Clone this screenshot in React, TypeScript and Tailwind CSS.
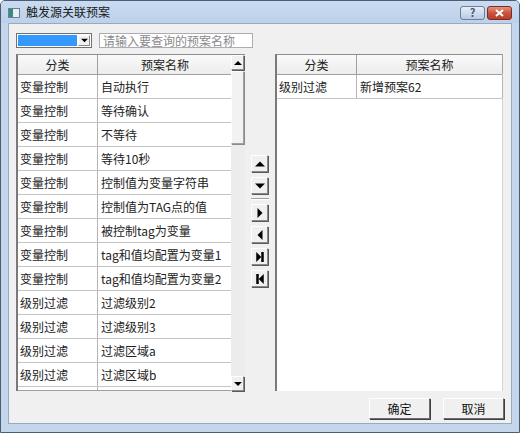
import React from "react";

const FONT = { fontFamily: '"Noto Sans CJK SC", "Microsoft YaHei", sans-serif' };

type Dir = "up" | "down" | "right" | "left" | "last" | "first";

function Arrow({ dir, size = 8 }: { dir: Dir; size?: number }) {
  const p: Record<Dir, React.ReactNode> = {
    up: <polygon points="0,6 8,6 4,2" fill="#000" />,
    down: <polygon points="0,2 8,2 4,6" fill="#000" />,
    right: <polygon points="2,0 6,4 2,8" fill="#000" />,
    left: <polygon points="6,0 2,4 6,8" fill="#000" />,
    last: (
      <>
        <polygon points="1,0 5,4 1,8" fill="#000" />
        <rect x="5" y="0" width="2" height="8" fill="#000" />
      </>
    ),
    first: (
      <>
        <rect x="1" y="0" width="2" height="8" fill="#000" />
        <polygon points="7,0 3,4 7,8" fill="#000" />
      </>
    ),
  };
  return (
    <svg width={size} height={size} viewBox="0 0 8 8">
      {p[dir]}
    </svg>
  );
}

function RaisedBtn({ dir, className, size = 8 }: { dir: Dir; className: string; size?: number }) {
  return (
    <div
      className={`flex items-center justify-center bg-[#f0f0f0] border border-t-white border-l-white border-r-[#8a8a8a] border-b-[#8a8a8a] shadow-[1px_1px_0_#5a5a5a] ${className}`}
    >
      <Arrow dir={dir} size={size} />
    </div>
  );
}

const leftRows: [string, string][] = [
  ["变量控制", "自动执行"],
  ["变量控制", "等待确认"],
  ["变量控制", "不等待"],
  ["变量控制", "等待10秒"],
  ["变量控制", "控制值为变量字符串"],
  ["变量控制", "控制值为TAG点的值"],
  ["变量控制", "被控制tag为变量"],
  ["变量控制", "tag和值均配置为变量1"],
  ["变量控制", "tag和值均配置为变量2"],
  ["级别过滤", "过滤级别2"],
  ["级别过滤", "过滤级别3"],
  ["级别过滤", "过滤区域a"],
  ["级别过滤", "过滤区域b"],
  ["", ""],
];

function Header({ nameWidth }: { nameWidth: string }) {
  return (
    <div className="flex h-[20px] shrink-0 bg-gradient-to-b from-[#fafafa] to-[#ececec] border-b border-[#a0a0a0] text-[12px] text-[#222]">
      <div className="w-[80px] shrink-0 flex items-center justify-center border-r border-[#a0a0a0]">分类</div>
      <div className={`${nameWidth} shrink-0 flex items-center justify-center border-r border-[#a0a0a0]`}>预案名称</div>
    </div>
  );
}

function Row({ a, b, nameWidth }: { a: string; b: string; nameWidth: string }) {
  return (
    <div className="flex h-[24px] shrink-0 bg-white border-b border-[#c4c4c4] text-[12px] text-[#222]">
      <div className="w-[80px] shrink-0 flex items-center pl-[2px] border-r border-[#b4b4b4]">{a}</div>
      <div className={`${nameWidth} shrink-0 flex items-center pl-[3px] border-r border-[#b4b4b4]`}>{b}</div>
    </div>
  );
}

export default function App() {
  return (
    <div
      className="w-[520px] h-[433px] flex flex-col border border-[#4d5d72] bg-[#c3d6ec] rounded-t-[5px] overflow-hidden"
      style={FONT}
    >
      {/* title bar */}
      <div className="h-[22px] shrink-0 flex items-center pl-[7px] pr-[7px] bg-gradient-to-b from-[#c9dbf0] to-[#bcd1ea]">
        <div className="w-[12px] h-[10px] mt-[1px] border border-[#6b7f96] bg-white flex">
          <div className="w-[4px] h-full bg-[#3c8a7e]" />
          <div className="flex-1 bg-[#e9eef5]" />
        </div>
        <span className="ml-[6px] text-[12px] text-[#1a1a1a] leading-none">触发源关联预案</span>
        <div className="ml-auto flex items-center gap-[2px] mt-[1px]">
          <div className="w-[25px] h-[14px] rounded-[3px] border border-[#6d7f98] bg-gradient-to-b from-[#e6eef8] to-[#b8cbe2] flex items-center justify-center text-[11px] font-bold text-[#4a5a70] leading-none">
            ?
          </div>
          <div className="w-[25px] h-[14px] rounded-[3px] border border-[#7d2a22] bg-gradient-to-b from-[#e4947f] via-[#c8553f] to-[#b83e2c] flex items-center justify-center">
            <svg width="9" height="8" viewBox="0 0 9 8">
              <path d="M1 1 L8 7 M8 1 L1 7" stroke="#fff" strokeWidth="2" />
            </svg>
          </div>
        </div>
      </div>

      {/* client area */}
      <div className="flex-1 mx-[7px] mb-[8px] bg-[#f0f0f0] border border-[#98a9c0] flex flex-col pl-[7px] pr-[7px] pt-[9px]">
        {/* filter row */}
        <div className="h-[15px] flex gap-[7px] shrink-0">
          <div className="w-[76px] h-full border border-[#707070] bg-white flex p-[1px]">
            <div className="flex-1 bg-[#3399ff]" />
            <div className="w-[12px] ml-[1px] bg-[#f0f0f0] border border-t-white border-l-white border-r-[#8a8a8a] border-b-[#8a8a8a] flex items-center justify-center">
              <Arrow dir="down" size={7} />
            </div>
          </div>
          <div className="w-[154px] h-full border border-[#abadb3] bg-white flex items-center pl-[3px] text-[12px] text-[#8a8a8a] leading-none">
            请输入要查询的预案名称
          </div>
        </div>

        {/* lists */}
        <div className="h-[337px] mt-[6px] flex shrink-0">
          {/* available list */}
          <div className="w-[229px] flex border-l-2 border-t border-[#8c8c8c] border-l-[#7a7a7a]">
            <div className="w-[213px] flex flex-col overflow-hidden bg-white border-b border-[#a0a0a0]">
              <Header nameWidth="w-[135px]" />
              {leftRows.map(([a, b], i) => (
                <Row key={i} a={a} b={b} nameWidth="w-[135px]" />
              ))}
            </div>
            <div className="w-[14px] flex flex-col bg-[#ececec]">
              <RaisedBtn dir="up" className="h-[15px] w-[13px]" />
              <div className="mt-[1px] h-[73px] w-[13px] bg-[#f2f2f2] border border-t-white border-l-white border-r-[#a0a0a0] border-b-[#a0a0a0] shadow-[1px_1px_0_#8a8a8a]" />
              <div className="flex-1" />
              <RaisedBtn dir="down" className="h-[15px] w-[13px]" />
            </div>
          </div>

          {/* move buttons */}
          <div className="w-[30px] flex flex-col pl-[6px] pt-[101px]">
            <RaisedBtn dir="up" size={10} className="w-[17px] h-[17px]" />
            <RaisedBtn dir="down" size={10} className="w-[17px] h-[17px] mt-[5px]" />
            <div className="w-[18px] mt-[4px] border-t border-[#a0a0a0] border-b border-b-white" />
            <RaisedBtn dir="right" size={10} className="w-[17px] h-[17px] mt-[4px]" />
            <RaisedBtn dir="left" size={10} className="w-[17px] h-[17px] mt-[5px]" />
            <RaisedBtn dir="last" size={10} className="w-[17px] h-[17px] mt-[5px]" />
            <RaisedBtn dir="first" size={10} className="w-[17px] h-[17px] mt-[5px]" />
          </div>

          {/* selected list */}
          <div className="w-[228px] flex flex-col bg-white border-l-2 border-l-[#7a7a7a] border-t border-t-[#8c8c8c] border-r border-r-[#d4d4d4]">
            <Header nameWidth="w-[146px]" />
            <Row a="级别过滤" b="新增预案62" nameWidth="w-[146px]" />
          </div>
        </div>

        {/* dialog buttons */}
        <div className="mt-[7px] flex justify-end gap-[13px]">
          <button className="w-[61px] h-[21px] bg-[#f0f0f0] border border-t-white border-l-white border-r-[#6d6d6d] border-b-[#6d6d6d] shadow-[1px_1px_0_#404040] text-[12px] text-[#111]">
            确定
          </button>
          <button className="w-[61px] h-[21px] bg-[#f0f0f0] border border-t-white border-l-white border-r-[#6d6d6d] border-b-[#6d6d6d] shadow-[1px_1px_0_#404040] text-[12px] text-[#111]">
            取消
          </button>
        </div>
      </div>
    </div>
  );
}
